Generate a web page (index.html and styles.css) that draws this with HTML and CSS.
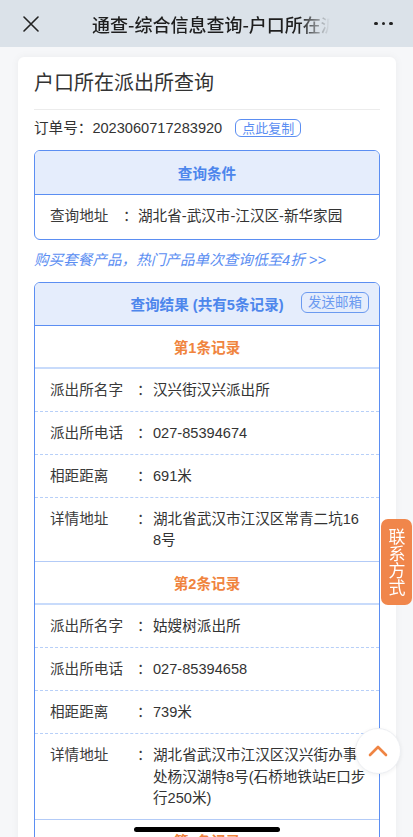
FILE: index.html
```html
<!DOCTYPE html>
<html lang="zh-CN">
<head>
<meta charset="utf-8">
<meta name="viewport" content="width=device-width, initial-scale=1">
<title>户口所在派出所查询</title>
<link rel="stylesheet" href="styles.css">
</head>
<body>
<div class="app">
  <header class="nav">
    <svg class="nav-close" width="16" height="16" viewBox="0 0 16 16"><path d="M1 1L15 15M15 1L1 15" stroke="#222" stroke-width="1.6" stroke-linecap="round" fill="none"/></svg>
    <div class="nav-title"><span>通查-综合信息查询-户口所在派出所查询</span></div>
    <div class="nav-more"><i></i><i></i><i></i></div>
  </header>

  <main class="page">
    <section class="card">
      <h1 class="title">户口所在派出所查询</h1>
      <div class="order">订单号：2023060717283920<button class="btn-copy">点此复制</button></div>

      <div class="box">
        <div class="box-head">查询条件</div>
        <div class="row row-cond"><span class="k">查询地址</span><span class="c">：</span><span class="v">湖北省-武汉市-江汉区-新华家园</span></div>
      </div>

      <a class="promo">购买套餐产品，热门产品单次查询低至4折 &gt;&gt;</a>

      <div class="box box-result">
        <div class="box-head">查询结果 (共有5条记录)<button class="btn-mail">发送邮箱</button></div>

        <div class="rec-head">第1条记录</div>
        <div class="row"><span class="k">派出所名字</span><span class="c">：</span><span class="v">汉兴街汉兴派出所</span></div>
        <div class="row"><span class="k">派出所电话</span><span class="c">：</span><span class="v">027-85394674</span></div>
        <div class="row"><span class="k">相距距离</span><span class="c">：</span><span class="v">691米</span></div>
        <div class="row row-last"><span class="k">详情地址</span><span class="c">：</span><span class="v">湖北省武汉市江汉区常青二坑168号</span></div>

        <div class="rec-head">第2条记录</div>
        <div class="row"><span class="k">派出所名字</span><span class="c">：</span><span class="v">姑嫂树派出所</span></div>
        <div class="row"><span class="k">派出所电话</span><span class="c">：</span><span class="v">027-85394658</span></div>
        <div class="row"><span class="k">相距距离</span><span class="c">：</span><span class="v">739米</span></div>
        <div class="row row-last"><span class="k">详情地址</span><span class="c">：</span><span class="v">湖北省武汉市江汉区汉兴街办事处杨汉湖特8号(石桥地铁站E口步行250米)</span></div>

        <div class="rec-head">第3条记录</div>
      </div>
    </section>
  </main>

  <div class="contact">联系方式</div>
  <button class="to-top"><svg width="20" height="12" viewBox="0 0 20 12"><path d="M2 10L10 2L18 10" stroke="#ef8443" stroke-width="2.6" stroke-linecap="round" stroke-linejoin="round" fill="none"/></svg></button>
  <div class="home-bar"></div>
</div>
</body>
</html>
```

FILE: styles.css
```css
* { box-sizing: border-box; }
html, body {
  margin: 0;
  padding: 0;
  height: 100%;
  overflow: hidden;
}
body {
  font-family: "Liberation Sans", "Noto Sans CJK SC", sans-serif;
  color: #333;
  background: #f6f7f9;
  font-size: 14.6px;
}
.app {
  height: 100%;
  overflow: hidden;
}

/* nav */
.nav {
  height: 47px;
  background: #dbe2e9;
  display: flex;
  align-items: center;
  padding: 0 20px 0 23px;
}
.nav-close { flex: none; }
.nav-title {
  margin-left: 53px;
  width: 238px;
  overflow: hidden;
  white-space: nowrap;
  font-family: "Noto Sans CJK SC", sans-serif;
  font-size: 18px;
  font-weight: 500;
  color: #1e1e1e;
  -webkit-mask-image: linear-gradient(to right, #000 calc(100% - 30px), transparent);
  mask-image: linear-gradient(to right, #000 calc(100% - 30px), transparent);
}
.nav-more {
  margin-left: auto;
  display: flex;
  gap: 4px;
}
.nav-more i {
  width: 3.6px;
  height: 3.6px;
  border-radius: 50%;
  background: #222;
}

/* card */
.page { padding: 10px 17px 0 18px; }
.card {
  background: #fff;
  border-radius: 6px;
  box-shadow: 0 0 8px rgba(0, 0, 0, 0.05);
  padding: 12px 16px 20px;
}
.title {
  margin: 0;
  font-size: 20px;
  line-height: 28px;
  font-weight: 400;
  color: #333;
  padding-bottom: 12px;
  border-bottom: 1px solid #ececec;
}
.order {
  margin-top: 7px;
  line-height: 22px;
  display: flex;
  align-items: center;
  color: #333;
}
.btn-copy, .btn-mail {
  font-family: inherit;
  background: transparent;
  border: 1px solid #5b8ef2;
  color: #5b8ef2;
  border-radius: 6px;
  font-size: 13px;
  line-height: 15px;
  padding: 0 6px;
  cursor: pointer;
}
.btn-copy { margin-left: 13px; height: 18px; }

/* boxes */
.box {
  margin-top: 11px;
  border: 1px solid #5b8ef2;
  border-radius: 6px;
  overflow: hidden;
}
.box-head {
  position: relative;
  height: 44px;
  background: #e5edfc;
  border-bottom: 1px solid #5b8ef2;
  display: flex;
  align-items: center;
  justify-content: center;
  color: #4d86ec;
  font-weight: 700;
  font-size: 14.6px;
}
.box-result { margin-top: 12px; }
.box-result .box-head { height: 43px; }
.btn-mail {
  position: absolute;
  right: 10px;
  top: 9px;
  height: 21px;
  font-weight: 400;
  color: #6b9af0;
  border-color: #6b9af0;
  font-size: 13.5px;
  padding: 0 6px;
}

.row {
  display: flex;
  align-items: flex-start;
  padding: 11px 12.9px 9.5px 15px;
  line-height: 21.5px;
  border-bottom: 1px dashed #b7cff8;
}
.row .k { width: 87px; flex: none; color: #3a3a3a; }
.row .c { width: 16px; flex: none; color: #3a3a3a; }
.row .v { flex: 1; min-width: 0; color: #333; word-break: break-all; }
.row-cond { border-bottom: none; padding-top: 11px; padding-bottom: 11px; }
.row-cond .k { width: 73px; }
.row-cond .c { width: 15px; }
.row-last { border-bottom: 1px solid #b3cbf7; }

.rec-head {
  height: 43px;
  display: flex;
  align-items: center;
  justify-content: center;
  color: #f0843e;
  font-weight: 700;
  border-bottom: 2px solid #c8dbfb;
}

.promo {
  display: block;
  margin-top: 10px;
  line-height: 20px;
  font-style: italic;
  color: #5b8ef2;
}

/* floating */
.contact {
  position: fixed;
  left: 381px;
  top: 519px;
  width: 31px;
  height: 86px;
  border-radius: 7px;
  background: #f0864b;
  color: #fff;
  font-family: "Noto Sans CJK SC", sans-serif;
  font-size: 17px;
  line-height: 18px;
  writing-mode: vertical-rl;
  text-orientation: upright;
  display: flex;
  align-items: center;
  justify-content: center;
}
.to-top {
  position: fixed;
  left: 355px;
  top: 728px;
  width: 46px;
  height: 46px;
  border-radius: 50%;
  background: #fff;
  border: 1px solid #eceef2;
  box-shadow: 0 1px 4px rgba(0, 0, 0, 0.06);
  display: flex;
  align-items: center;
  justify-content: center;
  padding: 0;
}
.home-bar {
  position: fixed;
  left: 134px;
  bottom: 5px;
  width: 146px;
  height: 5.5px;
  border-radius: 3px;
  background: #000;
}
```
